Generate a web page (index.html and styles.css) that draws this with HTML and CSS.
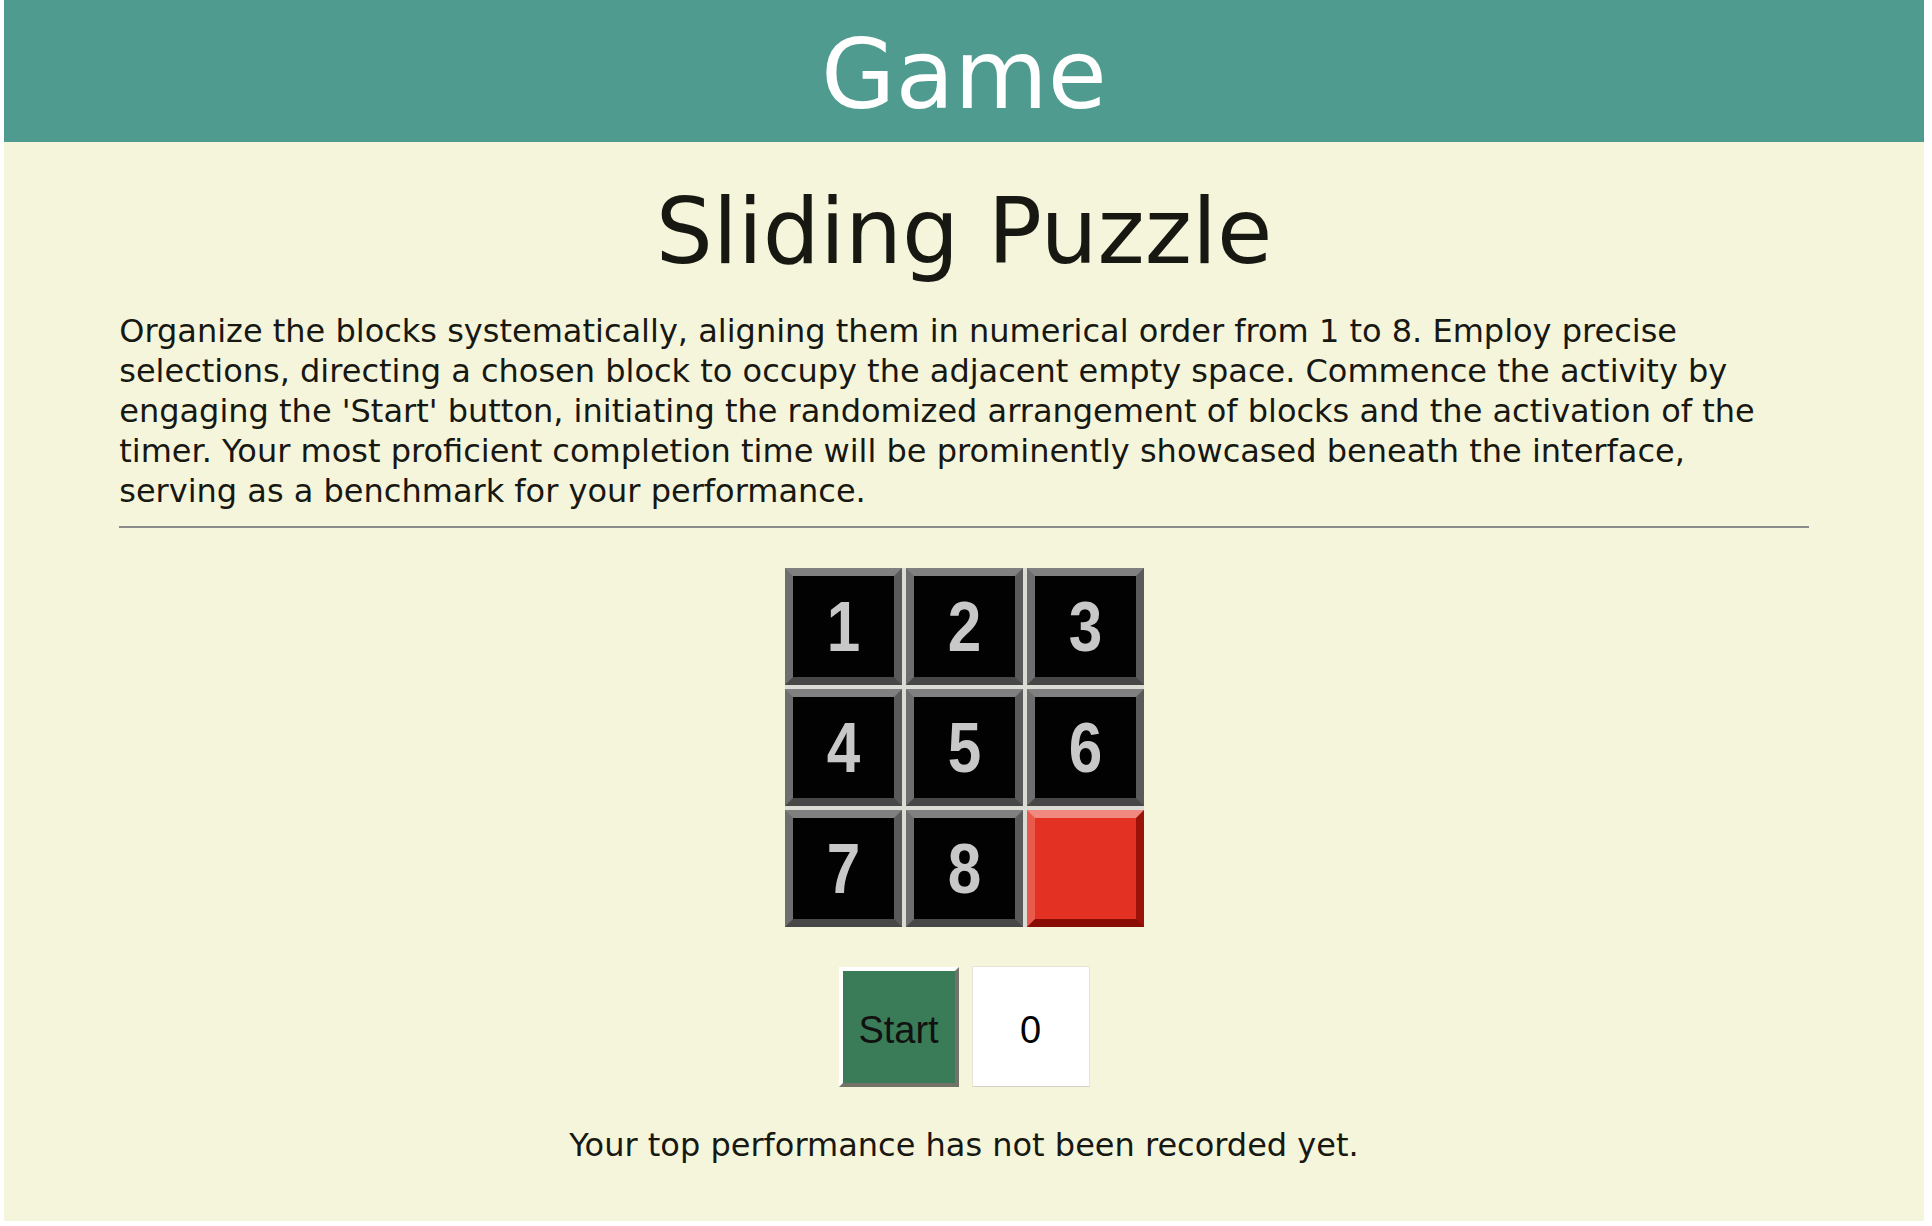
FILE: index.html
```html
<!DOCTYPE html>
<html lang="en">
<head>
<meta charset="utf-8">
<title>Game</title>
<link rel="stylesheet" href="styles.css">
</head>
<body>
<div class="page">
  <header class="topbar">Game</header>
  <h2 class="title">Sliding Puzzle</h2>
  <p class="intro">Organize the blocks systematically, aligning them in numerical order from 1 to 8. Employ precise selections, directing a chosen block to occupy the adjacent empty space. Commence the activity by engaging the 'Start' button, initiating the randomized arrangement of blocks and the activation of the timer. Your most proficient completion time will be prominently showcased beneath the interface, serving as a benchmark for your performance.</p>
  <hr class="rule">
  <div class="board">
    <div class="tile"><span class="num">1</span></div>
    <div class="tile"><span class="num">2</span></div>
    <div class="tile"><span class="num">3</span></div>
    <div class="tile"><span class="num">4</span></div>
    <div class="tile"><span class="num">5</span></div>
    <div class="tile"><span class="num">6</span></div>
    <div class="tile"><span class="num">7</span></div>
    <div class="tile"><span class="num">8</span></div>
    <div class="tile empty"></div>
  </div>
  <div class="controls">
    <button class="start">Start</button>
    <div class="timer">0</div>
  </div>
  <p class="best">Your top performance has not been recorded yet.</p>
</div>
</body>
</html>
```
FILE: styles.css
```css
html, body {
  margin: 0;
  padding: 0;
  background: #ffffff;
}

.page {
  margin-left: 4px;
  width: 1920px;
  height: 1221px;
  background: #f5f5dc;
  font-family: "DejaVu Sans", Verdana, sans-serif;
  color: #181812;
  overflow: hidden;
}

.topbar {
  box-sizing: border-box;
  height: 142px;
  padding-top: 27px;
  background: #509b8f;
  color: #ffffff;
  font-size: 96px;
  line-height: 96px;
  text-align: center;
}

.title {
  margin: 45px 0 0;
  font-size: 90px;
  line-height: 89px;
  font-weight: normal;
  text-align: center;
}

.intro {
  width: 88%;
  margin: 35px auto 0;
  font-size: 32px;
  line-height: 40px;
}

.rule {
  width: 88%;
  height: 2px;
  margin: 15px auto 0;
  border: 0;
  background: #8a8a8a;
}

.board {
  width: 359px;
  margin: 40px auto 0;
  display: grid;
  grid-template-columns: repeat(3, 117px);
  grid-template-rows: repeat(3, 117px);
  gap: 4px;
  background: #dcdcd6;
}

.tile {
  box-sizing: border-box;
  border: 8px solid;
  border-color: #808080 #5a5a5a #474747 #6e6e6e;
  background: #020202;
  color: #c8c8c8;
  font-family: "Liberation Sans", Arial, sans-serif;
  font-weight: bold;
  font-size: 70px;
  display: flex;
  align-items: center;
  justify-content: center;
}

.num {
  display: inline-block;
  transform: scaleX(0.86);
}

.tile.empty {
  background: #e33223;
  border-color: #f08a80 #9a1208 #8a0d05 #ea5a4c;
}

.controls {
  margin-top: 39px;
  display: flex;
  justify-content: center;
  align-items: center;
  gap: 13px;
}

.start {
  box-sizing: border-box;
  width: 120px;
  height: 120px;
  margin: 0;
  padding: 7px 0 0;
  border: 4px solid;
  border-color: #ffffff #727269 #727269 #ffffff;
  background: #3b7c58;
  color: #111111;
  font-family: "Liberation Sans", Arial, sans-serif;
  font-size: 38px;
}

.timer {
  box-sizing: border-box;
  width: 118px;
  height: 121px;
  padding-top: 7px;
  background: #ffffff;
  border: 1px solid #e6e4d4;
  border-bottom-color: #d2d0c0;
  color: #000000;
  font-family: "Liberation Sans", Arial, sans-serif;
  font-size: 38px;
  display: flex;
  align-items: center;
  justify-content: center;
}

.best {
  margin: 38px 0 0;
  font-size: 32px;
  line-height: 40px;
  text-align: center;
}
```
